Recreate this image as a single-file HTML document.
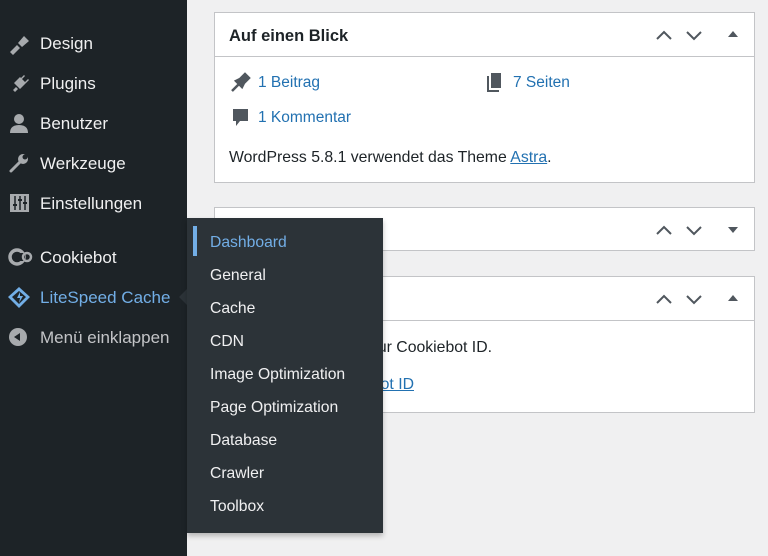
<!DOCTYPE html>
<html><head><meta charset="utf-8"><style>
*{margin:0;padding:0;box-sizing:border-box}
body{width:768px;height:556px;overflow:hidden;background:#f0f0f1;font-family:"Liberation Sans",sans-serif;position:relative}
.side{position:absolute;left:0;top:0;width:187px;height:556px;background:#1d2327}
.mi{position:absolute;left:0;height:30px;width:187px;color:#f0f0f1;font-size:17px;line-height:30px}
.mi span{position:absolute;left:40px;top:1px}
.mi svg{position:absolute;left:8px;top:5px}
.box{position:absolute;left:214px;width:541px;background:#fff;border:1px solid #c3c4c7;overflow:hidden}
.hd{height:44px;border-bottom:1px solid #c3c4c7;position:relative}
.ctl{position:absolute;left:440px;top:14px}
.fly{position:absolute;left:187px;top:218px;width:196px;height:315px;background:#2c3338;box-shadow:0 3px 5px rgba(0,0,0,.25)}
.fly div{position:absolute;left:23px;color:#f0f0f1;font-size:15.7px}
a{color:#2271b1;text-decoration:underline}
.lk{position:absolute;color:#2271b1;font-size:15.5px}
</style></head><body>
<div class="side">
<div class="mi" style="top:28px"><svg width="24" height="22" viewBox="0 0 24 22"><path d="M2 19l7-7 3 3-7 7zM10 10l6-7 5 5-7 6z" fill="#a7aaad"/></svg><span>Design</span></div>
<div class="mi" style="top:68px"><svg width="24" height="22" viewBox="0 0 24 22"><path d="M6 10l6-6 6 6-6 6zM5 17l3-3 2 2-3 3zM13 5l3-3 1 1-3 3zM17 9l3-3 1 1-3 3z" fill="#a7aaad"/></svg><span>Plugins</span></div>
<div class="mi" style="top:108px"><svg width="24" height="22" viewBox="0 0 24 22"><circle cx="11" cy="6" r="5" fill="#a7aaad"/><path d="M2 20q0-8 9-8t9 8z" fill="#a7aaad"/></svg><span>Benutzer</span></div>
<div class="mi" style="top:148px"><svg width="24" height="22" viewBox="0 0 24 22"><path d="M3 18l9-9" stroke="#a7aaad" stroke-width="3" stroke-linecap="round"/><circle cx="15" cy="6" r="5" fill="#a7aaad"/><circle cx="17" cy="4" r="2.5" fill="#1d2327"/></svg><span>Werkzeuge</span></div>
<div class="mi" style="top:188px"><svg width="24" height="22" viewBox="0 0 24 22"><rect x="2" y="1" width="19" height="18" fill="#a7aaad"/><path d="M7 3v14M12 3v14M17 3v14" stroke="#1d2327" stroke-width="1.5"/><path d="M5 12h4M10 7h4M15 10h4" stroke="#1d2327" stroke-width="2"/></svg><span>Einstellungen</span></div>
<div class="mi" style="top:242px"><svg width="26" height="22" viewBox="0 0 26 22"><circle cx="9" cy="10" r="7" fill="none" stroke="#a7aaad" stroke-width="3.5"/><rect x="12" y="6" width="5" height="8" fill="#1d2327"/><circle cx="19" cy="10" r="4" fill="none" stroke="#a7aaad" stroke-width="2.5"/></svg><span>Cookiebot</span></div>
<div class="mi" style="top:282px;color:#72aee6"><svg width="26" height="22" viewBox="0 0 26 22"><path d="M11 0l11 10-11 11L0 10z" fill="#72aee6"/><path d="M11 4l7 6-7 7-7-7z" fill="#1d2327"/><path d="M12 5l-3 6h3l-1 5 4-7h-3z" fill="#72aee6"/></svg><span>LiteSpeed Cache</span></div>
<div class="mi" style="top:322px;color:#c3c4c7"><svg width="24" height="22" viewBox="0 0 24 22"><circle cx="10" cy="10" r="9" fill="#a7aaad"/><path d="M6 10l6-4v8z" fill="#1d2327"/></svg><span>Menü einklappen</span></div>
<div style="position:absolute;left:179px;top:289px;border:8px solid transparent;border-right-color:#2c3338;border-left:0"></div>
</div>
<div class="box" style="top:12px;height:171px">
<div class="hd"><div style="position:absolute;left:14px;top:14px;font-size:16.5px;font-weight:bold;color:#1d2327">Auf einen Blick</div>
<svg class="ctl" width="90" height="16"><path d="M2 12l7-7 7 7M32 5l7 7 7-7" fill="none" stroke="#50575e" stroke-width="2"/><path d="M73 10l5-6 5 6z" fill="#50575e"/></svg></div>
<svg style="position:absolute;left:15px;top:58px" width="22" height="22"><path d="M2 20l7-7M6 10l6 6 2-4 5-5-4-4-5 5z" stroke="#50575e" stroke-width="2.5" fill="#50575e"/></svg>
<div class="lk" style="left:43px;top:61px">1 Beitrag</div>
<svg style="position:absolute;left:271px;top:60px" width="18" height="20"><path d="M5 0h10v15H5z" fill="#50575e"/><path d="M2 3v15h11" fill="none" stroke="#50575e" stroke-width="2"/></svg>
<div class="lk" style="left:298px;top:61px">7 Seiten</div>
<svg style="position:absolute;left:17px;top:95px" width="18" height="20"><path d="M1 1h15v12H8l-4 5v-5H1z" fill="#50575e"/></svg>
<div class="lk" style="left:43px;top:96px">1 Kommentar</div>
<div style="position:absolute;left:14px;top:136px;font-size:15.8px;color:#1d2327">WordPress 5.8.1 verwendet das Theme <a>Astra</a>.</div>
</div>
<div class="box" style="top:207px;height:44px"><svg class="ctl" width="90" height="16"><path d="M2 12l7-7 7 7M32 5l7 7 7-7" fill="none" stroke="#50575e" stroke-width="2"/><path d="M73 5l5 6 5-6z" fill="#50575e"/></svg></div>
<div class="box" style="top:276px;height:137px"><div class="hd"><svg class="ctl" width="90" height="16"><path d="M2 12l7-7 7 7M32 5l7 7 7-7" fill="none" stroke="#50575e" stroke-width="2"/><path d="M73 10l5-6 5 6z" fill="#50575e"/></svg></div>
<div style="position:absolute;right:262px;top:62px;font-size:15.8px;color:#1d2327;white-space:nowrap">Please enter your Cookiebot ID.</div>
<div style="position:absolute;right:340px;top:99px;font-size:15.8px;white-space:nowrap"><a>Add Cookiebot ID</a></div>
</div>
<div class="fly">
<div style="left:6px;top:8px;width:4px;height:30px;background:#72aee6"></div>
<div style="top:16px;color:#72aee6">Dashboard</div>
<div style="top:49px">General</div>
<div style="top:82px">Cache</div>
<div style="top:115px">CDN</div>
<div style="top:148px">Image Optimization</div>
<div style="top:181px">Page Optimization</div>
<div style="top:214px">Database</div>
<div style="top:247px">Crawler</div>
<div style="top:280px">Toolbox</div>
</div>
</body></html>
